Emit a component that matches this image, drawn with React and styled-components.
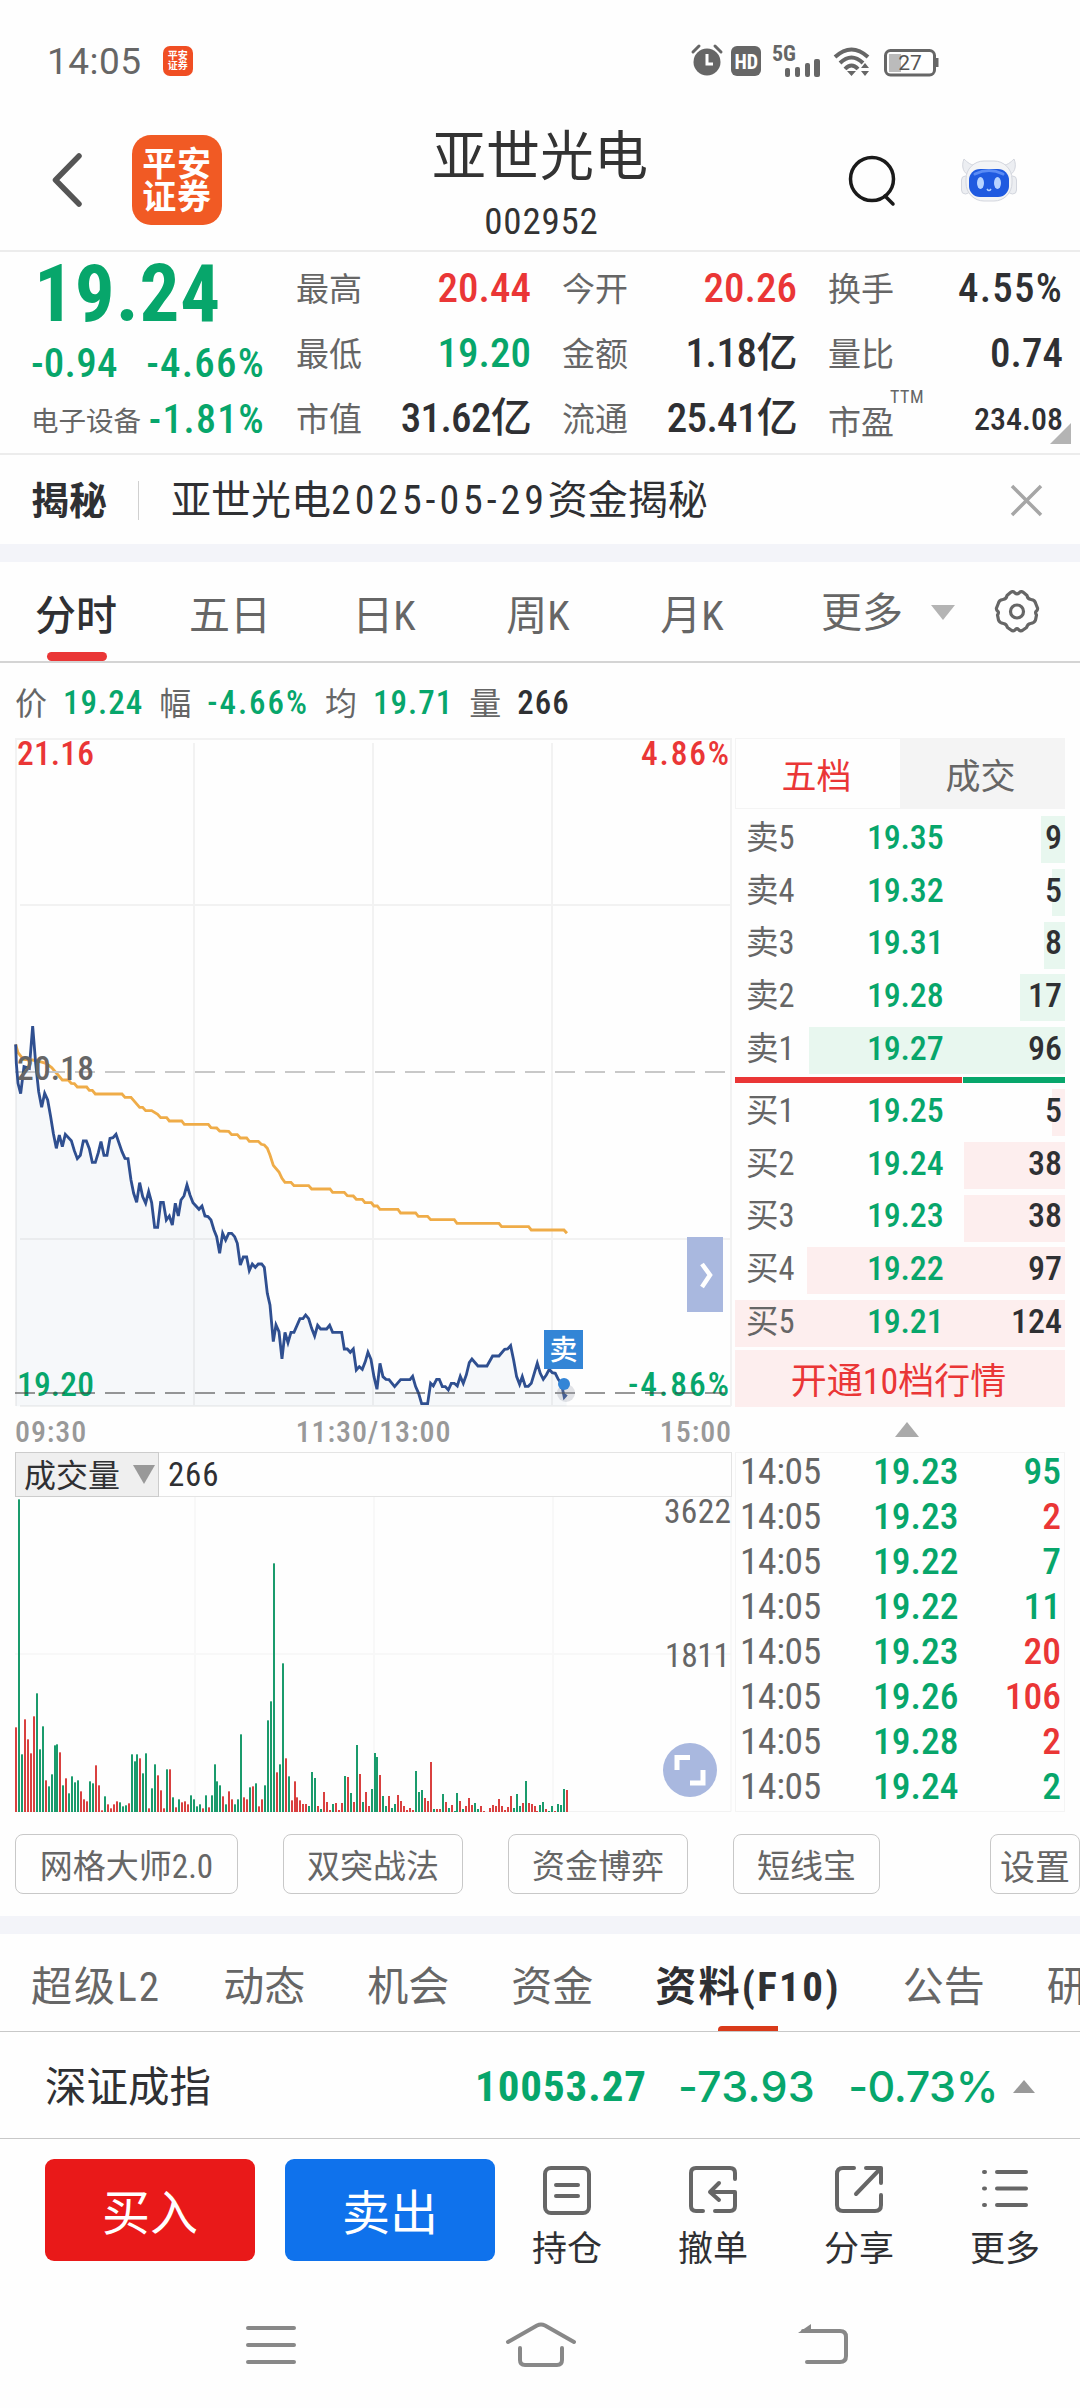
import { useState } from "react";
import styled, { createGlobalStyle } from "styled-components";

const RED = "#ea3636";
const GREEN = "#07a66b";
const DARK = "#2f3033";
const GREY = "#666666";

const GlobalStyle = createGlobalStyle`
  * {
    box-sizing: border-box;
  }

  body {
    margin: 0;
    background-color: #fefefe;
    font-family: "Roboto Condensed", "Noto Sans CJK SC", sans-serif;
    color: ${DARK};
  }

  svg {
    display: block;
    overflow: visible;
  }
`;

const Page = styled.div`
  width: 1080px;
  height: 2408px;
  display: flex;
  flex-direction: column;
  overflow: hidden;
`;

const Num = styled.span`
  font-size: ${(p) => p.$size || 41}px;
  font-weight: ${(p) => p.$weight || 500};
  line-height: 1;
  letter-spacing: ${(p) => p.$ls || 0}px;
  color: ${(p) => p.$color || DARK};
  white-space: nowrap;
`;

const Cn = styled.span`
  padding-top: 3px;
  font-size: ${(p) => p.$size || 33}px;
  font-weight: ${(p) => p.$weight || 400};
  line-height: 1.2;
  color: ${(p) => p.$color || GREY};
  white-space: nowrap;
`;

/* ---------- status bar ---------- */

const StatusBar = styled.div`
  height: 109px;
  padding: 13px 143px 0 47px;
  display: flex;
  align-items: center;
`;

const Clock = styled.span`
  font: 400 37px Roboto, sans-serif;
  letter-spacing: 0.5px;
  color: ${GREY};
`;

const StatusIcons = styled.div`
  margin-left: auto;
  display: flex;
  align-items: center;
`;

const MiniLogo = styled.div`
  width: 30px;
  height: 30px;
  margin-left: 21px;
  border-radius: 7px;
  background-color: #f04e23;
  color: white;
  font-size: 10px;
  font-weight: 700;
  line-height: 10px;
  padding: 5px 0 0 5px;
`;

/* ---------- header ---------- */

const Header = styled.header`
  height: 143px;
  border-bottom: 2px solid #ececec;
  display: grid;
  grid-template-columns: 1fr auto 1fr;
  align-items: center;
`;

const HeaderLeft = styled.div`
  display: flex;
  align-items: center;
  padding-left: 50px;
  gap: 48px;
`;

const HeaderRight = styled.div`
  display: flex;
  align-items: center;
  justify-content: flex-end;
  padding-right: 63px;
  gap: 64px;
`;

const Logo = styled.div`
  width: 90px;
  height: 90px;
  border-radius: 19px;
  background-color: #f15a24;
  color: white;
  font-size: 34px;
  font-weight: 700;
  line-height: 33px;
  letter-spacing: 0.8px;
  text-align: center;
  padding-top: 13px;
`;

const Title = styled.div`
  display: flex;
  flex-direction: column;
  align-items: center;
  padding-top: 10px;
`;

const StockName = styled.div`
  font-size: 54px;
  line-height: 74px;
  color: #333;
`;

const StockCode = styled.div`
  padding-left: 3px;
  font-size: 37px;
  line-height: 54px;
  letter-spacing: 0.8px;
  color: #333;
`;

/* ---------- quote ---------- */

const Quote = styled.section`
  position: relative;
  height: 203px;
  padding: 0 17px 0 31px;
  border-bottom: 2px solid #ececec;
  display: flex;
`;

const QuoteMain = styled.div`
  width: 234px;
  margin-right: 31px;
`;

const BigPrice = styled.div`
  height: 80px;
  line-height: 84px;
  padding-left: 3px;
  font-size: 79px;
  font-weight: 700;
  letter-spacing: 0.9px;
  color: ${GREEN};
`;

const MainRow = styled.div`
  height: ${(p) => p.$h}px;
  display: flex;
  align-items: center;
  justify-content: space-between;
`;

const QuoteGrid = styled.div`
  flex: 1;
  padding-top: 4px;
  display: grid;
  grid-template-columns: repeat(3, 235px);
  grid-auto-rows: 65px;
  column-gap: 31px;
`;

const QuoteCell = styled.div`
  display: flex;
  align-items: center;
  justify-content: space-between;
`;

const Ttm = styled.sup`
  margin-left: -4px;
  font-size: 18px;
  line-height: 0;
  vertical-align: 31px;
  letter-spacing: 0.6px;
`;

const Corner = styled.div`
  position: absolute;
  right: 9px;
  bottom: 9px;
  border-left: 21px solid transparent;
  border-bottom: 21px solid #b4b4b4;
`;

const Banner = styled.section`
  height: 89px;
  padding: 2px 37px 0 31px;
  display: flex;
  align-items: center;
`;

const BannerLine = styled.div`
  width: 1px;
  height: 39px;
  margin: 0 32px 0 31px;
  background-color: #d0d0d0;
`;

const CloseIcon = styled.svg`
  margin-left: auto;
`;

const Band = styled.div`
  height: 18px;
  background-color: #f3f4f9;
`;

/* ---------- period tabs ---------- */

const PeriodTabs = styled.nav`
  height: 101px;
  border-bottom: 2px solid #d4d4d4;
  display: flex;
  align-items: center;
`;

const PeriodTab = styled.button`
  position: relative;
  width: 154px;
  height: 99px;
  padding: 0 2px 0 0;
  border: none;
  background: none;
  font-family: inherit;
  font-size: 41px;
  font-weight: ${(p) => (p.$active ? 500 : 400)};
  color: ${(p) => (p.$active ? DARK : GREY)};

  &::after {
    content: "";
    display: ${(p) => (p.$active ? "block" : "none")};
    position: absolute;
    left: 47px;
    bottom: 0;
    width: 60px;
    height: 9px;
    border-radius: 5px;
    background-color: ${RED};
  }
`;

const MoreTab = styled.div`
  flex: 1;
  padding: 2px 41px 0 51px;
  display: flex;
  align-items: center;
  gap: 28px;
`;

const GearIcon = styled.svg`
  margin-left: auto;
  margin-top: -3px;
`;

const Triangle = styled.i`
  margin-left: ${(p) => p.$ml || 0}px;
  border: ${(p) => p.$half}px solid transparent;
  border-width: ${(p) => (p.$up ? `0 ${p.$half}px ${p.$h}px` : `${p.$h}px ${p.$half}px 0`)};
  border-bottom-color: ${(p) => (p.$up ? p.$color : "transparent")};
  border-top-color: ${(p) => (p.$up ? "transparent" : p.$color)};
`;

const PriceLine = styled.div`
  height: 75px;
  padding: 4px 0 0 15px;
  display: flex;
  align-items: center;
  gap: 16px;
`;

/* ---------- chart + order book ---------- */

const Board = styled.section`
  height: 1074px;
  padding-left: 15px;
  display: flex;
  gap: 3px;
`;

const ChartColumn = styled.div`
  width: 717px;
`;

const Axis = styled.div`
  height: 45px;
  padding-top: 3px;
  display: grid;
  grid-template-columns: 1fr auto 1fr;
  font-size: 30px;
  font-weight: 500;
  letter-spacing: 0.9px;
  line-height: 44px;
  color: #999;

  span:last-child {
    text-align: right;
  }
`;

const VolumeHead = styled.div`
  height: 45px;
  border: 1px solid #e4e4e4;
  border-left: none;
  display: flex;
  align-items: center;
`;

const VolumeSelect = styled.div`
  width: 144px;
  height: 45px;
  margin-right: 9px;
  padding-left: 8px;
  border: 1px solid #ccc;
  background-color: #efefef;
  display: flex;
  align-items: center;
  gap: 13px;
`;

const Book = styled.div`
  width: 330px;
`;

const BookTabs = styled.div`
  height: 71px;
  margin-bottom: 4px;
  border: 1px solid #f4f4f4;
  display: grid;
  grid-template-columns: 164px 1fr;
`;

const BookTab = styled.div`
  display: flex;
  align-items: center;
  justify-content: center;
  padding: 0 3px 0 0;
  font-size: 35px;
  color: ${(p) => (p.$active ? RED : GREY)};
  background-color: ${(p) => (p.$active ? "transparent" : "#f4f4f4")};
`;

const Level = styled.div`
  position: relative;
  height: 52.8px;
  padding: 0 3px 5px 11px;
  display: grid;
  grid-template-columns: 121px 1fr auto;
  align-items: center;
`;

const DepthBar = styled.div`
  position: absolute;
  z-index: -1;
  right: 0;
  top: 3px;
  height: 47px;
  background-color: ${(p) => (p.$buy ? "#fdeeee" : "#e8f7ef")};
`;

const Split = styled.div`
  height: 6px;
  margin-bottom: 3px;
  display: grid;
  grid-template-columns: 227px 1fr;
  gap: 1px;
`;

const SplitPart = styled.div`
  background-color: ${(p) => p.$color};
`;

const OpenLevels = styled.div`
  height: 57px;
  padding: 2px 3px 0 0;
  background-color: #fdeeee;
  color: ${RED};
  font-size: 36px;
  line-height: 60px;
  text-align: center;
`;

const Collapse = styled.div`
  height: 45px;
  padding-left: 14px;
  display: flex;
  align-items: center;
  justify-content: center;
`;

const Ticks = styled.div`
  height: 360px;
  border: 1px solid #f4f4f4;
`;

const Tick = styled.div`
  height: 45px;
  padding: 0 3px 7px 4px;
  display: grid;
  grid-template-columns: 133px 1fr auto;
  align-items: center;
`;

/* ---------- chips, info tabs, index ---------- */

const Chips = styled.section`
  height: 104px;
  padding: 22px 0 22px 15px;
  display: flex;
  gap: 45px;
`;

const Chip = styled.button`
  width: ${(p) => p.$w}px;
  height: 60px;
  padding: 0;
  flex-shrink: 0;
  border: 1.5px solid #c8c8c8;
  border-radius: 8px;
  background: none;
  font-family: inherit;
  font-size: ${(p) => p.$size || 33}px;
  color: ${GREY};

  &:last-child {
    margin-left: auto;
  }
`;

const InfoTabs = styled.nav`
  height: 98px;
  padding: 5px 0 0 31px;
  border-bottom: 1px solid #c8c8c8;
  display: flex;
  gap: 62px;
`;

const InfoTab = styled.div`
  position: relative;
  flex-shrink: 0;
  height: 92px;
  font-size: 41px;
  line-height: 97px;
  letter-spacing: ${(p) => p.$ls || 0}px;
  font-weight: ${(p) => (p.$active ? 700 : 400)};
  color: ${(p) => (p.$active ? DARK : GREY)};

  &::after {
    content: "";
    display: ${(p) => (p.$active ? "block" : "none")};
    position: absolute;
    left: 63px;
    bottom: 0;
    width: 60px;
    height: 5px;
    border-radius: 4px 0 0 0;
    background-color: #d93a1a;
  }
`;

const IndexRow = styled.section`
  height: 107px;
  padding: 2px 45px 0 45px;
  border-bottom: 1px solid #c8c8c8;
  display: flex;
  align-items: center;
`;

const IndexName = styled(Cn)`
  margin-right: auto;
`;

const Change = styled.span`
  font: 500 43px Inter, sans-serif;
  letter-spacing: ${(p) => p.$ls}px;
  margin-left: ${(p) => p.$ml}px;
  color: ${GREEN};
`;

/* ---------- bottom ---------- */

const Actions = styled.footer`
  height: 146px;
  padding: 20px 0 0 45px;
  display: flex;
`;

const TradeButton = styled.button`
  width: 210px;
  height: 102px;
  margin-right: 30px;
  padding: 0 0 3px;
  border: none;
  border-radius: 9px;
  background-color: ${(p) => p.$bg};
  color: white;
  font-family: inherit;
  font-size: 48px;
`;

const ActionList = styled.div`
  display: grid;
  grid-template-columns: repeat(4, 146px);
  margin-left: -31px;
`;

const Action = styled.div`
  display: flex;
  flex-direction: column;
  align-items: center;
  font-size: 35px;
  line-height: 50px;
  color: ${DARK};

  svg {
    margin: 6px 0 10px;
  }
`;

const NavBar = styled.div`
  height: 122px;
  padding: 0 0 2px 246px;
  display: flex;
  align-items: center;

  svg + svg {
    margin-left: 210px;
  }

  svg:last-child {
    margin-left: 221px;
  }
`;

const stats = [
  ["最高", "20.44", RED],
  ["今开", "20.26", RED],
  ["换手", "4.55%", DARK, 1.2],
  ["最低", "19.20", GREEN],
  ["金额", "1.18亿", DARK, -0.5],
  ["量比", "0.74"],
  ["市值", "31.62亿", DARK, -0.7],
  ["流通", "25.41亿", DARK, -0.7],
  ["市盈", "234.08"],
];

const sells = [
  ["卖5", "19.35", 9, 24],
  ["卖4", "19.32", 5, 13],
  ["卖3", "19.31", 8, 21],
  ["卖2", "19.28", 17, 45],
  ["卖1", "19.27", 96, 256],
];

const buys = [
  ["买1", "19.25", 5, 13],
  ["买2", "19.24", 38, 101],
  ["买3", "19.23", 38, 101],
  ["买4", "19.22", 97, 258],
  ["买5", "19.21", 124, 330],
];

const ticks = [
  ["19.23", 95, GREEN],
  ["19.23", 2, RED],
  ["19.22", 7, GREEN],
  ["19.22", 11, GREEN],
  ["19.23", 20, RED],
  ["19.26", 106, RED],
  ["19.28", 2, RED],
  ["19.24", 2, GREEN],
];

// minute line and average line, three units to a pixel
const priceLine =
  "47,133 49,190 54,250 62,281 72,200 88,205 98,78 107,190 116,275 125,322 134,280 143,300 152,350 160,400 169,445 178,405 187,440 196,403 214,422 223,452 232,476 241,466 250,423 259,423 268,446 277,487 286,487 295,458 303,425 312,466 321,466 330,415 339,413 348,403 366,455 375,475 384,476 393,540 401,580 410,607 419,548 428,590 437,610 446,575 455,608 464,682 473,682 482,607 490,607 499,660 508,648 517,675 526,610 535,648 543,600 552,588 561,555 570,585 579,608 597,628 606,618 615,648 624,650 633,660 642,690 650,710 659,760 668,700 677,720 686,700 695,700 704,710 712,730 721,795 730,771 740,771 748,812 757,792 766,802 775,792 785,792 793,802 802,880 810,915 820,1025 828,975 837,995 846,1077 855,997 864,1028 873,997 882,997 900,956 909,956 917,945 926,956 935,985 944,1008 953,976 962,987 980,987 989,976 998,997 1025,997 1033,1047 1042,1047 1051,1057 1060,1047 1069,1110 1078,1100 1087,1108 1096,1085 1104,1057 1113,1078 1122,1130 1131,1168 1140,1090 1149,1130 1158,1138 1167,1139 1184,1160 1202,1139 1230,1139 1238,1129 1247,1160 1256,1180 1265,1211 1283,1211 1292,1150 1300,1158 1310,1138 1318,1138 1327,1160 1336,1160 1345,1170 1354,1150 1363,1150 1372,1158 1381,1129 1390,1150 1399,1125 1408,1088 1416,1077 1434,1098 1461,1098 1478,1068 1497,1068 1514,1048 1523,1047 1532,1037 1541,1080 1550,1130 1559,1153 1567,1130 1576,1159 1585,1159 1594,1150 1612,1090 1621,1120 1630,1138 1639,1125 1648,1108 1657,1118 1666,1120 1675,1138 1684,1150 1693,1192 1700,1184";
const averageLine =
  "47,133 54,158 70,178 98,180 120,185 138,190 155,203 187,240 205,240 214,250 223,251 232,261 260,261 268,271 277,271 286,282 366,282 375,292 393,292 419,322 428,322 437,332 455,332 473,343 482,353 500,353 508,363 545,363 553,373 625,373 633,383 650,384 659,393 686,394 695,404 712,404 721,414 740,414 748,424 775,424 784,433 793,435 802,445 810,465 820,496 837,516 846,535 855,547 873,547 882,557 926,557 935,567 990,567 998,577 1033,577 1042,587 1060,588 1069,598 1087,598 1095,608 1114,608 1122,618 1132,618 1140,628 1194,628 1202,639 1247,639 1255,649 1283,649 1292,659 1363,659 1371,670 1497,670 1505,680 1586,680 1594,690 1692,690 1701,700";

// one entry per minute; a negative one is drawn red
const volumes = [
  -254, 938, 173, -278, -218, -176, -287, 356, 188, 257, -95, 77, 113, 200, 203, -179, 80, -101, 56,
  107, 89, 95, -62, -38, -32, 92, 86, -140, -80, -5, 47, -23, -11, -23, -32, 29, 17, 20, -26, 173,
  152, 173, -161, 116, 176, -11, 71, 143, -110, -65, -11, 128, -128, 44, -14, 38, -29, -32, -23, 50,
  38, 17, 23, -11, 50, -14, 50, 143, 92, 80, -47, 23, -62, -38, 23, 38, 233, -44, -38, 74, -77, 86,
  -17, -38, 80, 275, 332, 746, -119, 143, 446, -161, 107, -35, -92, -44, -35, -24, -24, 18, 120, 102,
  -18, 9, -60, -30, -6, 24, -27, -6, -27, 108, -105, 57, -30, 201, -114, 30, -60, -18, 69, 177, 165,
  -111, 48, 18, -48, 12, 24, -51, -33, -18, -6, -12, -6, 123, 60, 66, -42, -33, -150, 9, -9, -9, 54,
  -30, 12, -21, 3, 57, -33, 9, -18, -42, -21, 27, 9, -18, -3, 0, -12, -21, -18, -39, -18, -6, -15,
  -48, 12, 54, 18, -27, 93, -27, -24, -18, -3, 21, 30, -9, 3, 18, -3, 24, 21, 69, -66,
];

const MinuteChart = () => (
  <svg width="717" height="669" viewBox="15 738 717 669" fontSize="33.5" fontWeight="500">
    <g stroke="#f2f2f2" strokeWidth="2" fill="none">
      <path d="M16 738V1406M194 743V1406M373 743V1406M552 743V1406M731 738V1406" />
      <path d="M16 739H731M20 905H731M20 1239H731M20 1406H731" />
    </g>
    <g transform="translate(0 1000) scale(0.3333)">
      <polygon points={`${priceLine} 1700,1219 47,1219`} fill="#506a98" fillOpacity="0.045" />
      <polyline points={averageLine} fill="none" stroke="#efac48" strokeWidth="8.5" />
    </g>
    <path d="M15 1072H731" stroke="#c8c8c8" strokeWidth="2" strokeDasharray="20 10" />
    <g transform="translate(0 1000) scale(0.3333)">
      <polyline points={priceLine} fill="none" stroke="#2f4f90" strokeWidth="8.5" />
    </g>
    <text x="17" y="765" fill={RED} textLength="77">21.16</text>
    <text x="641" y="765" fill={RED} textLength="88">4.86%</text>
    <text x="17" y="1080" fill={GREY} textLength="77">20.18</text>
    <text x="17" y="1396" fill={GREEN} textLength="77">19.20</text>
    <text x="628" y="1396" fill={GREEN} textLength="101">-4.86%</text>
    <path d="M15 1393H731" stroke="#444" strokeOpacity="0.55" strokeWidth="2" strokeDasharray="20 10" />
    <circle cx="566" cy="1393" r="9" fill="#8a8f9e" fillOpacity="0.25" />
    <circle cx="564" cy="1384" r="6" fill="#3385d6" />
    <rect x="544" y="1330" width="39" height="39" fill="#3385d6" />
    <text x="563.5" y="1360" fill="#fff" fontSize="28" textAnchor="middle">卖</text>
    <rect x="687" y="1237" width="36" height="75" fill="#a9b8df" />
    <path d="M702 1264L710 1275L702 1287" stroke="#fff" strokeWidth="4.5" fill="none" />
  </svg>
);

const VolumeChart = () => (
  <svg width="717" height="315" viewBox="15 1497 717 315" fontSize="33.5" fontWeight="400">
    <path d="M195 1497V1812M374 1497V1812M553 1497V1812M15 1654H731" stroke="#f8f8f8" strokeWidth="2" />
    <path d="M731 1497V1811.5H15" stroke="#f2f2f2" strokeWidth="1" fill="none" />
    {volumes.map((v, i) => {
      const h = Math.abs(v) / 3;
      return (
        <rect
          key={i}
          x={Math.round(15 + i * 2.963)}
          y={1812 - h}
          width="2"
          height={h}
          fill={v < 0 ? "#d9403f" : "#1a9b6c"}
        />
      );
    })}
    <text x="664" y="1523" fill={GREY} textLength="67">3622</text>
    <text x="665" y="1667" fill={GREY} textLength="65">1811</text>
    <circle cx="690" cy="1770" r="27" fill="#a9b8df" />
    <path d="M677 1770V1757.500H690M690 1783H703V1770" stroke="#fff" strokeWidth="5" fill="none" />
  </svg>
);

const Levels = ({ rows, buy }) =>
  rows.map(([name, price, qty, width]) => (
    <Level key={name}>
      <DepthBar $buy={buy} style={{ width }} />
      <Cn $size={32.5}>{name}</Cn>
      <Num $size={34} $ls={-0.2} $color={GREEN}>{price}</Num>
      <Num $size={34}>{qty}</Num>
    </Level>
  ));

const App = () => {
  const [period, setPeriod] = useState("分时");

  return (
    <Page>
      <GlobalStyle />
      <StatusBar>
        <Clock>14:05</Clock>
        <MiniLogo>平安<br />证券</MiniLogo>
        <StatusIcons>
          <svg width="245" height="32" viewBox="693 45 245 32">
            <g fill="#666">
              <circle cx="708" cy="62" r="13.500" />
              <path d="M694 52L700 46M722 52L716 46" stroke="#666" strokeWidth="3" strokeLinecap="round" />
              <rect x="732" y="46" width="30" height="30" rx="6" />
              <rect x="786" y="68" width="5" height="9" rx="2" />
              <rect x="796" y="67" width="5" height="10" rx="2" />
              <rect x="806" y="63" width="5" height="14" rx="2" />
              <rect x="815" y="59" width="6" height="18" rx="2" />
              <path d="M848 71L852.500 76L857 71ZM862 71H870L866 76ZM862 68H870L866 63Z" />
            </g>
            <path d="M708 54V64H714" stroke="#fff" strokeWidth="3" fill="none" />
            <text x="735.5" y="68.500" fill="#fff" fontSize="20" fontWeight="700">HD</text>
            <text x="773" y="61" fill="#666" fontSize="22" fontWeight="700">5G</text>
            <g stroke="#666" strokeWidth="4" fill="none">
              <path d="M836 57Q852.500 42 869 57M841 63Q852.500 52 864 63M846 69Q852.500 62 859 69" />
              <rect x="886.500" y="50.500" width="49" height="24.500" rx="5" strokeWidth="3" />
            </g>
            <rect x="890" y="54" width="12" height="18" fill="#bbb" />
            <path d="M938 58V67" stroke="#666" strokeWidth="3" />
            <text x="911" y="70" fill="#555" fontSize="21" textAnchor="middle" fontFamily="Roboto">27</text>
          </svg>
        </StatusIcons>
      </StatusBar>

      <Header>
        <HeaderLeft>
          <svg width="34" height="56" viewBox="0 0 34 56">
            <path d="M29 4L5.500 28L29 52" stroke="#555" strokeWidth="5.500" fill="none" strokeLinecap="round" strokeLinejoin="round" />
          </svg>
          <Logo>平安<br />证券</Logo>
        </HeaderLeft>
        <Title>
          <StockName>亚世光电</StockName>
          <StockCode>002952</StockCode>
        </Title>
        <HeaderRight>
          <svg width="50" height="52" viewBox="0 0 50 52">
            <circle cx="25" cy="25" r="21.500" stroke="#1a1a1a" strokeWidth="3.500" fill="none" />
            <path d="M38 42L46 50" stroke="#1a1a1a" strokeWidth="3.500" strokeLinecap="round" />
          </svg>
          <svg width="56" height="44" viewBox="0 0 56 44">
            <g fill="#eceef2" stroke="#d3d6de" strokeWidth="1">
              <path d="M3 1C0 8 2 16 10 18L18 8C10 8 6 4 3 1ZM53 1C56 8 54 16 46 18L38 8C46 8 50 4 53 1Z" />
              <rect x="0.500" y="18" width="8" height="18" rx="4" />
              <rect x="47.500" y="18" width="8" height="18" rx="4" />
              <rect x="5" y="3" width="46" height="40" rx="18" fill="#f3f4f6" />
            </g>
            <rect x="8" y="11" width="40" height="28" rx="11" fill="#1f5ae0" />
            <path d="M14 16Q28 9 42 16" stroke="#5b8cf5" strokeWidth="3" fill="none" strokeLinecap="round" />
            <ellipse cx="19.500" cy="25" rx="3.500" ry="6" fill="#b8d4ff" />
            <ellipse cx="36.500" cy="25" rx="3.500" ry="6" fill="#b8d4ff" />
            <path d="M26 31Q28 34 30 31" stroke="#b8d4ff" strokeWidth="1.500" fill="none" />
          </svg>
        </HeaderRight>
      </Header>

      <Quote>
        <QuoteMain>
          <BigPrice>19.24</BigPrice>
          <MainRow $h={62}>
            <Num $color={GREEN} $ls={0.2}>-0.94</Num>
            <Num $color={GREEN} $ls={1.2}>-4.66%</Num>
          </MainRow>
          <MainRow $h={52}>
            <Cn $size={27.5}>电子设备</Cn>
            <Num $color={GREEN} $size={40} $ls={1.2}>-1.81%</Num>
          </MainRow>
        </QuoteMain>
        <QuoteGrid>
          {stats.map(([name, value, color, ls]) => (
            <QuoteCell key={name}>
              <Cn>
                {name}
                {name === "市盈" && <Ttm>TTM</Ttm>}
              </Cn>
              <Num $color={color} $ls={ls} $size={name === "市盈" ? 32 : 41}>{value}</Num>
            </QuoteCell>
          ))}
        </QuoteGrid>
        <Corner />
      </Quote>

      <Banner>
        <Cn $size={38} $weight={700} $color={DARK}>揭秘</Cn>
        <BannerLine />
        <Num $size={40} $weight={400}>
          亚世光电<Num $size={40} $weight={400} $ls={3.9}>2025-05-29</Num>资金揭秘
        </Num>
        <CloseIcon width="33" height="33" viewBox="0 0 33 33">
          <path d="M2 2L31 31M31 2L2 31" stroke="#a6a6a6" strokeWidth="3.500" />
        </CloseIcon>
      </Banner>

      <Band />

      <PeriodTabs>
        {["分时", "五日", "日K", "周K", "月K"].map((name) => (
          <PeriodTab key={name} $active={name === period} onClick={() => setPeriod(name)}>
            {name}
          </PeriodTab>
        ))}
        <MoreTab>
          <Cn $size={41}>更多</Cn>
          <Triangle $half={12.5} $h={15} $color="#b4b4b4" />
          <GearIcon width="44" height="44" viewBox="0 0 44 44">
            <path
              d="M15.500 3.500Q18 1.500 20 4Q22 6 24 4Q26 1.500 28.500 3.500L32 6.500Q32.500 10 36 10.500Q40 11 40.500 14L42.500 19Q43 21 41 22.500Q40 24 41.500 26L40.500 31Q39.500 34 35.500 34.500Q32.500 35 31.500 38.500L28 41Q25.500 43 23.500 40.500Q22 39 20.500 40.500Q18.500 43 16 41L12.500 38.500Q11.500 35 8.500 34.500Q4.500 34 3.500 31L2.500 26Q4 24 3 22.500Q1 21 1.500 19L3.500 14Q4 11 8 10.500Q11.500 10 12 6.500Z"
              stroke="#666"
              strokeWidth="3.200"
              fill="none"
              strokeLinejoin="round"
            />
            <circle cx="22" cy="22.500" r="6.500" stroke="#666" strokeWidth="3.200" fill="none" />
          </GearIcon>
        </MoreTab>
      </PeriodTabs>

      <PriceLine>
        <Cn $size={32}>价</Cn>
        <Num $size={33} $ls={1} $color={GREEN}>19.24</Num>
        <Cn $size={32}>幅</Cn>
        <Num $size={33} $ls={2} $color={GREEN}>-4.66%</Num>
        <Cn $size={32}>均</Cn>
        <Num $size={33} $ls={1} $color={GREEN}>19.71</Num>
        <Cn $size={32}>量</Cn>
        <Num $size={33} $ls={1}>266</Num>
      </PriceLine>

      <Board>
        <ChartColumn>
          <MinuteChart />
          <Axis>
            <span>09:30</span>
            <span>11:30/13:00</span>
            <span>15:00</span>
          </Axis>
          <VolumeHead>
            <VolumeSelect>
              <Cn $size={32} $color={DARK}>成交量</Cn>
              <Triangle $half={11} $h={19} $color="#999" />
            </VolumeSelect>
            <Num $size={33} $weight={400} $ls={0.8}>266</Num>
          </VolumeHead>
          <VolumeChart />
        </ChartColumn>

        <Book>
          <BookTabs>
            <BookTab $active>五档</BookTab>
            <BookTab>成交</BookTab>
          </BookTabs>
          <Levels rows={sells} />
          <Split>
            <SplitPart $color={RED} />
            <SplitPart $color={GREEN} />
          </Split>
          <Levels rows={buys} buy />
          <OpenLevels>开通10档行情</OpenLevels>
          <Collapse>
            <Triangle $up $half={12} $h={15} $color="#aaa" />
          </Collapse>
          <Ticks>
            {ticks.map(([price, qty, color], i) => (
              <Tick key={i}>
                <Num $size={37.5} $weight={400} $ls={-0.4} $color={GREY}>14:05</Num>
                <Num $size={37.5} $color={GREEN}>{price}</Num>
                <Num $size={37.5} $color={color}>{qty}</Num>
              </Tick>
            ))}
          </Ticks>
        </Book>
      </Board>

      <Chips>
        <Chip $w={223}>网格大师2.0</Chip>
        <Chip $w={180}>双突战法</Chip>
        <Chip $w={180}>资金博弈</Chip>
        <Chip $w={147}>短线宝</Chip>
        <Chip $w={90} $size={35}>设置</Chip>
      </Chips>

      <Band />

      <InfoTabs>
        <InfoTab $ls={2.1}>超级L2</InfoTab>
        <InfoTab>动态</InfoTab>
        <InfoTab>机会</InfoTab>
        <InfoTab>资金</InfoTab>
        <InfoTab $active $ls={2.3}>资料(F10)</InfoTab>
        <InfoTab>公告</InfoTab>
        <InfoTab>研报</InfoTab>
      </InfoTabs>

      <IndexRow>
        <IndexName $size={41.5} $color={DARK}>深证成指</IndexName>
        <Num $size={43} $weight={700} $ls={0.9} $color={GREEN}>10053.27</Num>
        <Change $ml={31} $ls={0.3}>-73.93</Change>
        <Change $ml={33} $ls={-0.4}>-0.73%</Change>
        <Triangle $up $half={11} $h={13} $ml={15} $color="#999" />
      </IndexRow>

      <Actions>
        <TradeButton $bg="#e91919">买入</TradeButton>
        <TradeButton $bg="#0f72ec">卖出</TradeButton>
        <ActionList>
          <Action>
            <svg width="50" height="50" viewBox="0 0 50 50" fill="none" stroke="#666" strokeWidth="4" strokeLinecap="round">
              <rect x="3" y="3" width="44" height="45" rx="6" />
              <path d="M14 20H36M14 31H36" />
            </svg>
            持仓
          </Action>
          <Action>
            <svg width="50" height="50" viewBox="0 0 50 50" fill="none" stroke="#666" strokeWidth="4" strokeLinecap="round" strokeLinejoin="round">
              <path d="M15 46H8Q3 46 3 41V8Q3 3 8 3H42Q47 3 47 8V14" />
              <path d="M27 46H42Q47 46 47 41V27H23M31 18L22 27L31 35" />
            </svg>
            撤单
          </Action>
          <Action>
            <svg width="50" height="50" viewBox="0 0 50 50" fill="none" stroke="#666" strokeWidth="4" strokeLinecap="round" strokeLinejoin="round">
              <path d="M20 3H9Q3 3 3 9V40Q3 46 9 46H41Q47 46 47 40V30" />
              <path d="M32 3H47V18M47 3L22 29" />
            </svg>
            分享
          </Action>
          <Action>
            <svg width="50" height="50" viewBox="0 0 50 50" stroke="#666" strokeWidth="4" strokeLinecap="round">
              <path d="M4 7H5M17 7H46M4 23.500H5M17 23.500H46M4 40H5M17 40H46" />
            </svg>
            更多
          </Action>
        </ActionList>
      </Actions>

      <NavBar>
        <svg width="50" height="44" viewBox="0 0 50 44" stroke="#888" strokeWidth="4" strokeLinecap="round">
          <path d="M2 5H48M2 22H48M2 39H48" />
        </svg>
        <svg width="70" height="46" viewBox="0 0 70 46" fill="none" stroke="#888" strokeWidth="4" strokeLinecap="round" strokeLinejoin="round">
          <path d="M2 20L31 3.500Q35 1.500 39 3.500L68 20" />
          <path d="M14 26V38Q14 43 19 43H51Q56 43 56 38V26" />
        </svg>
        <svg width="52" height="44" viewBox="0 0 52 44" fill="none" stroke="#888" strokeWidth="4" strokeLinecap="round">
          <path d="M6 8H43Q49 8 49 14V33Q49 39 43 39H10" />
          <path d="M1 10L14 1V10Z" fill="#888" stroke="none" />
        </svg>
      </NavBar>
    </Page>
  );
};

export default App;
